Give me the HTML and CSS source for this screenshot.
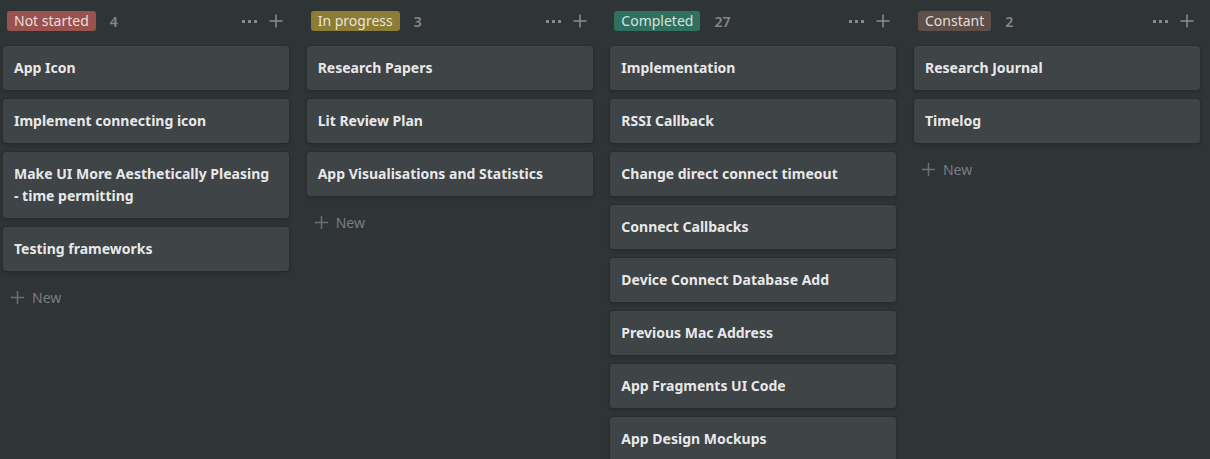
FILE: index.html
```html
<!DOCTYPE html>
<html lang="en">
<head>
<meta charset="utf-8">
<title>Board</title>
<link rel="stylesheet" href="styles.css">
</head>
<body>
<div class="board">
  <section class="column">
    <header class="col-head">
      <span class="tag tag-red">Not started</span>
      <span class="count">4</span>
      <span class="head-actions">
        <span class="dots"><i></i><i></i><i></i></span>
        <svg class="plus" width="14" height="14" viewBox="0 0 14 14"><path d="M7 0.5v13M0.5 7h13"/></svg>
      </span>
    </header>
    <div class="cards">
      <div class="card">App Icon</div>
      <div class="card">Implement connecting icon</div>
      <div class="card">Make UI More Aesthetically Pleasing - time permitting</div>
      <div class="card">Testing frameworks</div>
    </div>
    <div class="new-row"><svg class="plus-sm" width="13" height="13" viewBox="0 0 13 13"><path d="M6.5 0v13M0 6.5h13"/></svg><span>New</span></div>
  </section>

  <section class="column">
    <header class="col-head">
      <span class="tag tag-yellow">In progress</span>
      <span class="count">3</span>
      <span class="head-actions">
        <span class="dots"><i></i><i></i><i></i></span>
        <svg class="plus" width="14" height="14" viewBox="0 0 14 14"><path d="M7 0.5v13M0.5 7h13"/></svg>
      </span>
    </header>
    <div class="cards">
      <div class="card">Research Papers</div>
      <div class="card">Lit Review Plan</div>
      <div class="card">App Visualisations and Statistics</div>
    </div>
    <div class="new-row"><svg class="plus-sm" width="13" height="13" viewBox="0 0 13 13"><path d="M6.5 0v13M0 6.5h13"/></svg><span>New</span></div>
  </section>

  <section class="column">
    <header class="col-head">
      <span class="tag tag-green">Completed</span>
      <span class="count">27</span>
      <span class="head-actions">
        <span class="dots"><i></i><i></i><i></i></span>
        <svg class="plus" width="14" height="14" viewBox="0 0 14 14"><path d="M7 0.5v13M0.5 7h13"/></svg>
      </span>
    </header>
    <div class="cards">
      <div class="card">Implementation</div>
      <div class="card">RSSI Callback</div>
      <div class="card">Change direct connect timeout</div>
      <div class="card">Connect Callbacks</div>
      <div class="card">Device Connect Database Add</div>
      <div class="card">Previous Mac Address</div>
      <div class="card">App Fragments UI Code</div>
      <div class="card">App Design Mockups</div>
    </div>
  </section>

  <section class="column">
    <header class="col-head">
      <span class="tag tag-brown">Constant</span>
      <span class="count">2</span>
      <span class="head-actions">
        <span class="dots"><i></i><i></i><i></i></span>
        <svg class="plus" width="14" height="14" viewBox="0 0 14 14"><path d="M7 0.5v13M0.5 7h13"/></svg>
      </span>
    </header>
    <div class="cards">
      <div class="card">Research Journal</div>
      <div class="card">Timelog</div>
    </div>
    <div class="new-row"><svg class="plus-sm" width="13" height="13" viewBox="0 0 13 13"><path d="M6.5 0v13M0 6.5h13"/></svg><span>New</span></div>
  </section>
</div>
</body>
</html>
```

FILE: styles.css
```css
html, body {
  margin: 0;
  padding: 0;
  background: #2f3437;
  height: 100%;
  overflow: hidden;
}

body {
  font-family: "Noto Sans", "Open Sans", sans-serif;
  color: rgba(255, 255, 255, 0.9);
  font-size: 14px;
}

.board {
  display: grid;
  grid-template-columns: repeat(4, 286px);
  column-gap: 17.67px;
  padding-left: 3px;
  padding-top: 11px;
  align-items: start;
}

.column {
  display: flex;
  flex-direction: column;
}

.col-head {
  display: flex;
  align-items: center;
  height: 20px;
  padding-left: 4px;
  padding-right: 6px;
  margin-bottom: 15px;
}

.tag {
  display: inline-flex;
  align-items: center;
  height: 20px;
  padding: 0 7px;
  border-radius: 3px;
  font-size: 14px;
  line-height: 20px;
  color: rgba(255, 255, 255, 0.82);
  white-space: nowrap;
}

.tag-red { background: #9a524e; }
.tag-yellow { background: #8c7c35; }
.tag-green { background: #2f7060; }
.tag-brown { background: #5f4f48; }

.count {
  margin-left: 14px;
  color: rgba(255, 255, 255, 0.42);
  font-weight: 600;
  font-size: 14px;
}

.head-actions {
  margin-left: auto;
  display: flex;
  align-items: center;
  gap: 12px;
}

.dots {
  display: flex;
  gap: 3px;
}

.dots i {
  display: block;
  width: 3px;
  height: 3px;
  background: #8b8d8f;
  border-radius: 0.5px;
}

.plus path, .plus-sm path {
  stroke: #8b8d8f;
  stroke-width: 1.5;
  fill: none;
}

.plus-sm path {
  stroke: #6e7173;
}

.cards {
  display: flex;
  flex-direction: column;
  gap: 9px;
}

.card {
  background: #3f4447;
  border-radius: 3px;
  padding: 11px 15px 11px 11px;
  font-weight: 700;
  font-size: 14px;
  line-height: 22px;
  color: rgba(255, 255, 255, 0.9);
  box-shadow: rgba(15, 15, 15, 0.1) 0 0 0 1px, rgba(15, 15, 15, 0.2) 0 2px 4px;
}

.new-row {
  display: flex;
  align-items: center;
  gap: 8px;
  height: 36px;
  margin-top: 8px;
  padding-left: 8px;
  color: #7b7e80;
  font-size: 14px;
}
```
